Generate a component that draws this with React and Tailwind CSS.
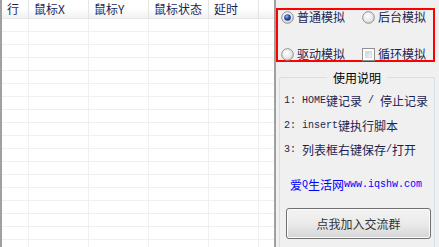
import React from "react";

const CJK = { fontFamily: '"Noto Sans CJK SC", "Noto Sans", sans-serif' };
const MONO = { fontFamily: '"Liberation Mono", "DejaVu Sans Mono", monospace' };

function A({ children }) {
  return (
    <span className="text-[10px] whitespace-pre" style={MONO}>
      {children}
    </span>
  );
}

function Radio({ checked }) {
  return (
    <svg width="13" height="13" viewBox="0 0 13 13" className="shrink-0">
      <defs>
        <radialGradient id="rg" cx="0.4" cy="0.35" r="0.7">
          <stop offset="0" stopColor="#ffffff" />
          <stop offset="0.7" stopColor="#e6e6e6" />
          <stop offset="1" stopColor="#c8c8c8" />
        </radialGradient>
        <radialGradient id="rb" cx="0.4" cy="0.35" r="0.7">
          <stop offset="0" stopColor="#9fb8f0" />
          <stop offset="0.5" stopColor="#2f4fb0" />
          <stop offset="1" stopColor="#142a6e" />
        </radialGradient>
      </defs>
      <circle cx="6.5" cy="6.5" r="5.8" fill="url(#rg)" stroke="#8e8f8f" strokeWidth="1" />
      {checked && <circle cx="6.5" cy="6.5" r="3.3" fill="url(#rb)" />}
    </svg>
  );
}

function Check() {
  return (
    <div className="w-[13px] h-[13px] border border-[#8e8f8f] bg-white p-[2px] shrink-0">
      <div className="w-full h-full bg-gradient-to-br from-[#cbcfd5] to-[#f6f6f6] border border-[#d8dbe0]" />
    </div>
  );
}

const cols = [27, 60, 60, 60, 50, 17];
const heads = ["行", "鼠标X", "鼠标Y", "鼠标状态", "延时", ""];

export default function App() {
  const rows = Array.from({ length: 18 });
  return (
    <div className="w-[439px] h-[247px] flex bg-[#f0f0f0] overflow-hidden text-[#1e1e50]" style={CJK}>
      {/* list view */}
      <div className="w-[276px] h-full bg-white border-l-2 border-r-2 border-[#a0a0a0] flex flex-col overflow-hidden shrink-0">
        <div className="flex h-[19px] shrink-0 bg-gradient-to-b from-white via-white to-[#f0f1f3] border-b border-[#e8e8e8]">
          {cols.map((w, i) => (
            <div
              key={i}
              className="h-full flex items-center pl-[5px] text-[12px] leading-none border-r border-[#e4e4e4] shrink-0"
              style={{ width: w }}
            >
              {heads[i]}
            </div>
          ))}
        </div>
        {rows.map((_, r) => (
          <div key={r} className="flex h-[13px] shrink-0 border-b border-[#f0f0f0]">
            {cols.map((w, i) => (
              <div key={i} className="h-full border-r border-[#f0f0f0] shrink-0" style={{ width: w }} />
            ))}
          </div>
        ))}
      </div>

      {/* right panel */}
      <div className="flex-1 flex flex-col">
        <div className="mt-[8px] w-[159px] h-[54px] shrink-0 border-2 border-[#ff0000] flex flex-col justify-between text-[12px] leading-none">
          <div className="flex items-center h-[14px]">
            <div className="flex items-center w-[84px] pl-[3px] gap-[3px]">
              <Radio checked />
              <span>普通模拟</span>
            </div>
            <div className="flex items-center gap-[3px]">
              <Radio />
              <span>后台模拟</span>
            </div>
          </div>
          <div className="flex items-center h-[14px] -mb-[1px]">
            <div className="flex items-center w-[84px] pl-[3px] gap-[3px]">
              <Radio />
              <span>驱动模拟</span>
            </div>
            <div className="flex items-center gap-[3px]">
              <Check />
              <span>循环模拟</span>
            </div>
          </div>
        </div>

        <div className="relative mt-[15px] ml-[3px] w-[156px] flex-1 border border-[#d5dfe5] rounded-t-[3px] border-b-0">
          <div className="absolute -top-[8px] left-0 right-0 flex justify-center">
            <span className="bg-[#f0f0f0] px-[6px] text-[12px] leading-[16px] text-black">使用说明</span>
          </div>
          <div className="flex flex-col pl-[4px] pt-[16px] text-[12px] leading-[14px]">
            <div className="h-[14px] flex items-center whitespace-nowrap">
              <A>1: HOME</A>键记录<A> / </A>停止记录
            </div>
            <div className="h-[14px] mt-[11px] flex items-center whitespace-nowrap">
              <A>2: insert</A>键执行脚本
            </div>
            <div className="h-[14px] mt-[10px] flex items-center whitespace-nowrap">
              <A>3: </A>列表框右键保存<A>/</A>打开
            </div>
          </div>
          <div className="h-[14px] mt-[21px] pl-[10px] flex items-center text-[12px] leading-[14px] text-[#0000ff] whitespace-nowrap">
            爱<A>Q</A>生活网<A>www.iqshw.com</A>
          </div>
          <div className="mt-[16px] ml-[6px] w-[145px] h-[31px] rounded-[3px] border border-[#707070] bg-gradient-to-b from-[#f2f2f2] via-[#ebebeb] to-[#d5d5d5] flex items-center justify-center text-[12px] text-[#333] shadow-[inset_0_0_0_1px_#fcfcfc]">
            点我加入交流群
          </div>
        </div>
      </div>
    </div>
  );
}
